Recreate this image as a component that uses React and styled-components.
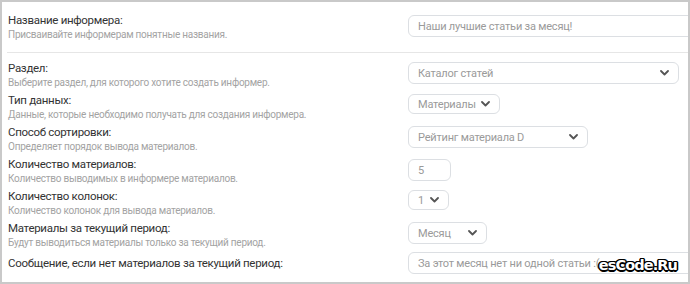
import styled, { createGlobalStyle } from 'styled-components'

const GlobalStyle = createGlobalStyle`
  html, body {
    margin: 0;
    padding: 0;
    background: #ffffff;
  }
  body {
    font-family: Roboto, "Noto Sans", "Liberation Sans", sans-serif;
  }
`

const rows = [
  { label: 'Раздел:', hint: 'Выберите раздел, для которого хотите создать информер.', kind: 'select', value: 'Каталог статей', width: 271 },
  { label: 'Тип данных:', hint: 'Данные, которые необходимо получать для создания информера.', kind: 'select', value: 'Материалы', small: true },
  { label: 'Способ сортировки:', hint: 'Определяет порядок вывода материалов.', kind: 'select', value: 'Рейтинг материала D', width: 180 },
  { label: 'Количество материалов:', hint: 'Количество выводимых в информере материалов.', kind: 'input', value: '5', width: 43 },
  { label: 'Количество колонок:', hint: 'Количество колонок для вывода материалов.', kind: 'select', value: '1', width: 41, small: true },
  { label: 'Материалы за текущий период:', hint: 'Будут выводиться материалы только за текущий период.', kind: 'select', value: 'Месяц', width: 79 },
]

const Chevron = () => (
  <svg width="9" height="6" viewBox="0 0 9 6">
    <polyline points="1,1 4.5,4.5 8,1" fill="none" stroke="#555" strokeWidth="1.8" strokeLinecap="round" strokeLinejoin="round" />
  </svg>
)

const Control = ({ kind, value, width, small }) =>
  kind === 'select' ? (
    <SelectBox $width={width} $small={small}>
      <SelectValue>{value}</SelectValue>
      <Chevron />
    </SelectBox>
  ) : (
    <InputBox $width={width}>{value}</InputBox>
  )

const App = () => {
  return (
    <>
      <GlobalStyle />
      <Frame>
        <NameRow>
          <LabelCol>
            <Label>Название информера:</Label>
            <Hint>Присваивайте информерам понятные названия.</Hint>
          </LabelCol>
          <InputBox $wide>Наши лучшие статьи за месяц!</InputBox>
        </NameRow>
        <Separator />
        <List>
          {rows.map((r) => (
            <Row key={r.label}>
              <LabelCol>
                <Label>{r.label}</Label>
                <Hint>{r.hint}</Hint>
              </LabelCol>
              <Control {...r} />
            </Row>
          ))}
          <Row $center>
            <LabelCol>
              <Label>Сообщение, если нет материалов за текущий период:</Label>
            </LabelCol>
            <InputBox $wide $flush>За этот месяц нет ни одной статьи :(</InputBox>
          </Row>
        </List>
        <Watermark>esCode.Ru</Watermark>
      </Frame>
    </>
  )
}

export default App

const Frame = styled.div`
  position: relative;
  box-sizing: border-box;
  width: 690px;
  height: 284px;
  border: 2px solid #c9c9c9;
  overflow: hidden;
  padding-top: 11px;
`

const NameRow = styled.div`
  display: grid;
  grid-template-columns: 400px 1fr;
  padding-left: 6px;
  align-items: start;
`

const LabelCol = styled.div`
  display: flex;
  flex-direction: column;
`

const Label = styled.div`
  font-size: 11.5px;
  letter-spacing: -0.3px;
  line-height: 15px;
  color: #333;
  white-space: nowrap;
`

const Hint = styled.div`
  font-size: 10px;
  letter-spacing: -0.25px;
  line-height: 14px;
  color: #a3a3a3;
  white-space: nowrap;
`

const Separator = styled.div`
  margin: 10px 0 8px 5px;
  border-top: 1px solid #e6e6e6;
`

const List = styled.div`
  display: flex;
  flex-direction: column;
  gap: 3px;
`

const Row = styled.div`
  display: grid;
  grid-template-columns: 400px 1fr;
  padding-left: 6px;
  min-height: ${(p) => (p.$center ? '22px' : '29px')};
  margin-top: ${(p) => (p.$center ? '-1px' : '0')};
  align-items: ${(p) => (p.$center ? 'center' : 'start')};
  justify-items: start;
`

const boxBase = `
  box-sizing: border-box;
  border: 1px solid #dcdfe3;
  border-radius: 6px;
  font-size: 11px;
  letter-spacing: -0.2px;
  color: #9a9a9a;
  display: flex;
  align-items: center;
  padding: 0 9px;
  white-space: nowrap;
  background: #fff;
`

const InputBox = styled.div`
  ${boxBase}
  height: 22px;
  margin-top: ${(p) => (p.$flush ? '0' : '2px')};
  width: ${(p) => (p.$wide ? '320px' : `${p.$width}px`)};
`

const SelectBox = styled.div`
  ${boxBase}
  gap: 5px;
  padding-right: 9px;
  height: ${(p) => (p.$small ? '20px' : '22px')};
  margin-top: 1px;
  width: ${(p) => (p.$width ? `${p.$width}px` : 'fit-content')};

  svg {
    flex: none;
  }
`

const SelectValue = styled.span`
  flex: 1;
`

const Watermark = styled.div`
  position: absolute;
  right: 11px;
  bottom: 9px;
  font-family: "DejaVu Sans", sans-serif;
  font-weight: 700;
  font-size: 14.5px;
  letter-spacing: -0.9px;
  color: #fff;
  text-shadow:
    -1px -1px 0 #000, 1px -1px 0 #000, -1px 1px 0 #000, 1px 1px 0 #000,
    0 -1.5px 0 #000, 0 1.5px 0 #000, -1.5px 0 0 #000, 1.5px 0 0 #000;
`
